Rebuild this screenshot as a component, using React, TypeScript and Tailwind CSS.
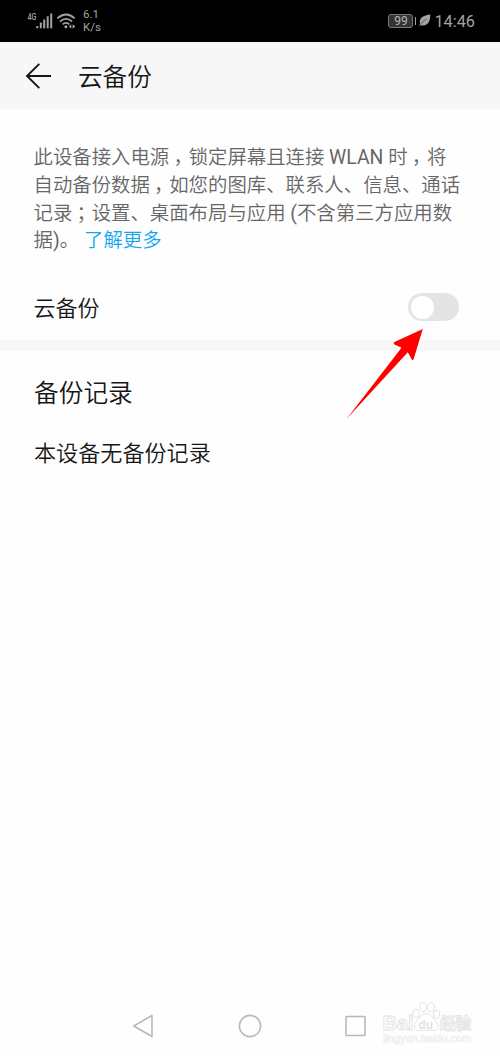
import React from "react";

// Full-width comma / semicolon whose mark sits in the middle of its cell.
function Mark({ children }: { children: string }) {
  return (
    <span className="inline-block w-[19.4px] pl-[4.2px] [font-feature-settings:'halt']">{children}</span>
  );
}

function StatusBar() {
  return (
    <header className="flex h-[42px] shrink-0 items-center bg-black pr-[25px] pl-[27px] font-['Roboto',sans-serif] font-normal text-[#a3a3a3]">
      <svg width="54" height="42" viewBox="27 0 54 42" fill="none" aria-hidden="true">
        <text x="27.5" y="20" fontSize="9.5" fontWeight="500" textLength="9" lengthAdjust="spacingAndGlyphs" fill="#a3a3a3">4G</text>
        <g fill="#a3a3a3">
          <rect x="36.3" y="26" width="2" height="2.3" />
          <rect x="39.8" y="22.5" width="2" height="5.8" />
          <rect x="43.2" y="19.5" width="2" height="8.8" />
          <rect x="46.7" y="16.3" width="2" height="12" />
          <rect x="50.2" y="13.5" width="2" height="14.8" />
        </g>
        <g stroke="#a3a3a3" strokeWidth="1.7">
          <path d="M57.3 18.3 Q66 10.7 74.7 18.3" />
          <path d="M60 21.5 Q66 16.2 72 21.5" />
          <path d="M62.6 24.3 Q66 21.5 69.4 24.3" />
        </g>
        <circle cx="65.9" cy="26.7" r="1.5" fill="#a3a3a3" />
        <path d="M71.3 24.2v4.6L68.8 26.5zM72.6 24.2v4.6l2.7-2.3z" fill="#a3a3a3" />
      </svg>
      <div className="ml-[2px] text-[11.5px] leading-[13px]">
        <div>6.1</div>
        <div>K/s</div>
      </div>
      <div className="ml-auto flex items-center">
        <div className="flex h-[14px] w-[25px] items-center justify-center rounded-[3px] border border-[#777] bg-[#333] text-[12px] leading-none text-[#b5b5b5]">
          99
        </div>
        <div className="ml-[1.5px] h-[8px] w-[1.5px] bg-[#a3a3a3]" />
        <svg className="ml-[3px]" width="12" height="13" viewBox="0 0 12 13" aria-hidden="true">
          <path d="M11.3 0.5C4.5 1.2 0 3.8 1 9.2C0.8 10 0.5 11 0.3 12.3L1.7 11.3C8.4 12.5 11.3 8 11.3 0.5Z" fill="#a3a3a3" />
          <path d="M1.2 10.8Q3.8 7.4 7.6 4.8" stroke="#222" strokeWidth=".6" fill="none" />
        </svg>
        <span className="ml-[3px] pt-[2px] text-[16.3px] leading-none">14:46</span>
      </div>
    </header>
  );
}

function Watermark() {
  return (
    <svg
      className="absolute top-[998px] left-[380px]"
      width="96"
      height="50"
      viewBox="380 998 96 50"
      fill="#fff"
      stroke="#e4e4e4"
      strokeWidth="1"
      aria-hidden="true"
    >
      <text x="382.5" y="1030" fontFamily="Liberation Sans, sans-serif" fontSize="20" fontWeight="700" textLength="31" lengthAdjust="spacingAndGlyphs">Bai</text>
      <ellipse cx="416" cy="1013.5" rx="3" ry="4.2" transform="rotate(-15 416 1013.5)" />
      <ellipse cx="423" cy="1007" rx="3.3" ry="4.6" />
      <ellipse cx="431" cy="1007.3" rx="3.3" ry="4.6" transform="rotate(10 431 1007.3)" />
      <ellipse cx="436.5" cy="1014.3" rx="3" ry="4.2" transform="rotate(15 436.5 1014.3)" />
      <path d="M426 1013.5C431 1013.5 432 1018 435 1020.5C441 1026 438 1031.5 432 1030.5Q426 1029.5 420.5 1030.5C414 1031.5 412.5 1025 417 1020.5C420.5 1017.5 421.5 1013.5 426 1013.5Z" />
      <text x="418.5" y="1028.5" fontFamily="Liberation Sans, sans-serif" fontSize="12" fontWeight="700" fill="#e2e2e2" stroke="none">du</text>
      <text x="440" y="1029" fontFamily="Noto Sans CJK SC, sans-serif" fontSize="15.5" fontWeight="700">经验</text>
      <text x="383" y="1042" fontFamily="Liberation Sans, sans-serif" fontSize="10.5" fontWeight="400" fill="#eeeeee" stroke="#eeeeee" strokeWidth=".4" textLength="88" lengthAdjust="spacingAndGlyphs">jingyan.baidu.com</text>
    </svg>
  );
}

export default function App() {
  return (
    <div className="relative flex h-[1056px] w-[500px] flex-col overflow-hidden bg-[#fefefe] font-['Noto_Sans_CJK_SC',sans-serif] font-[350] text-[#161616]">
      <StatusBar />
      <div className="flex h-[67px] shrink-0 items-center bg-[#f7f7f7] pl-[25px]">
        <svg width="27" height="26" viewBox="0 0 27 26" fill="none" stroke="#161616" strokeWidth="1.9" aria-hidden="true">
          <path d="M26 13H2M14.3 .8L2 13l12.3 12.2" />
        </svg>
        <h1 className="ml-[26px] pb-[2px] text-[24.6px] leading-[36px]">云备份</h1>
      </div>

      <main>
        <p className="pt-[35px] pl-[33.5px] font-['Roboto','Noto_Sans_CJK_SC',sans-serif] text-[19.4px] leading-[27.8px] whitespace-nowrap text-[#666]">
          此设备接入电源<Mark>，</Mark>锁定屏幕且连接 <span className="font-normal">WLAN</span> 时<Mark>，</Mark>将
          <br />
          自动备份数据<Mark>，</Mark>如您的图库、联系人、信息、通话
          <br />
          记录<Mark>；</Mark>设置、桌面布局与应用 <span className="font-normal">(</span>不含第三方应用数
          <br />
          据<span className="font-normal">)</span>。<a className="ml-[5px] text-[#10a6ee]">了解更多</a>
        </p>
        <div className="mt-[19px] flex h-[66px] items-center justify-between pr-[41px] pl-[33.5px]">
          <span className="pb-[2px] text-[22px] leading-[32px]">云备份</span>
          <button role="switch" aria-checked="false" className="flex h-[28px] w-[51px] items-center rounded-full bg-[#e4e4e4] pl-[2.5px]">
            <span className="size-[23px] rounded-full bg-white" />
          </button>
        </div>
        <div className="h-[11px] bg-[#f7f7f7]" />
        <section className="pt-[22px] pl-[34px]">
          <h2 className="text-[24.7px] leading-[36px]">备份记录</h2>
          <p className="mt-[26px] text-[22.1px] leading-[32px]">本设备无备份记录</p>
        </section>
      </main>

      <svg className="absolute top-[326px] left-[344px]" width="82" height="96" viewBox="344 326 82 96" aria-hidden="true">
        <path d="M346.5 419L401.5 347.8L394 344.2Q393 342.5 395.5 341.6L422.8 329L413.5 359.5Q412 361 411 358L407.8 352.3Z" fill="#fe0000" stroke="#fff" strokeWidth="3" paintOrder="stroke" />
      </svg>

      <nav className="mt-auto flex h-[60px] shrink-0 items-center pl-[132px]">
        <svg width="236" height="26" viewBox="132 1013 236 26" fill="none" stroke="#b9b9b9" strokeWidth="1.6" strokeLinejoin="round" aria-hidden="true">
          <path d="M133.7 1026L152 1015.5V1036.5Z" />
          <circle cx="250" cy="1026" r="10.6" />
          <rect x="346" y="1016.5" width="19" height="19" rx=".5" />
        </svg>
      </nav>
      <Watermark />
    </div>
  );
}
